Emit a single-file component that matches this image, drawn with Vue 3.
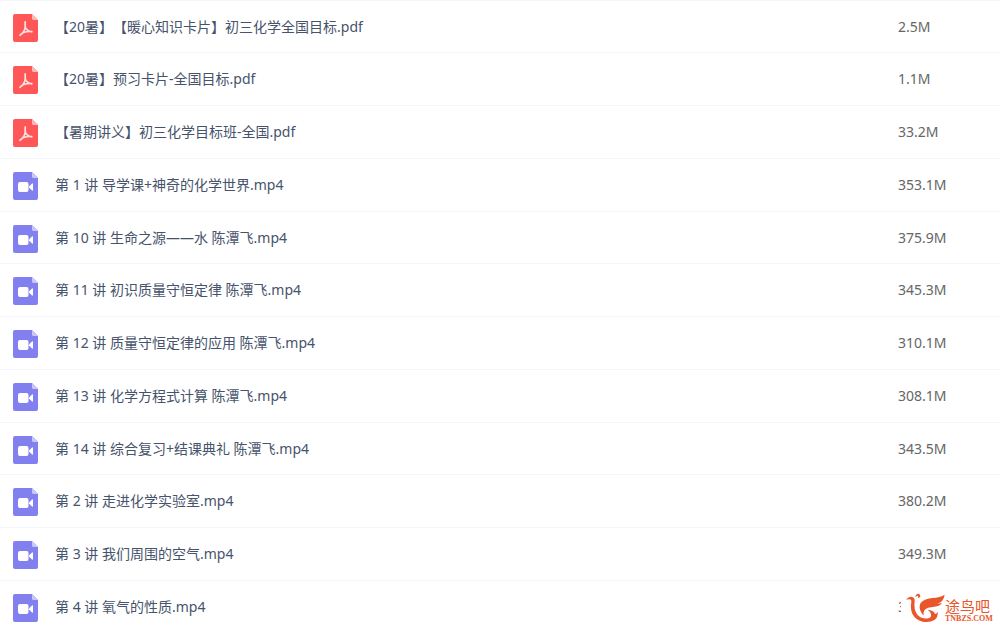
<script setup>
const files = [
  { name: '【20暑】【暖心知识卡片】初三化学全国目标.pdf', size: '2.5M', type: 'pdf' },
  { name: '【20暑】预习卡片-全国目标.pdf', size: '1.1M', type: 'pdf' },
  { name: '【暑期讲义】初三化学目标班-全国.pdf', size: '33.2M', type: 'pdf' },
  { name: '第 1 讲 导学课+神奇的化学世界.mp4', size: '353.1M', type: 'video' },
  { name: '第 10 讲 生命之源——水 陈潭飞.mp4', size: '375.9M', type: 'video' },
  { name: '第 11 讲 初识质量守恒定律 陈潭飞.mp4', size: '345.3M', type: 'video' },
  { name: '第 12 讲 质量守恒定律的应用 陈潭飞.mp4', size: '310.1M', type: 'video' },
  { name: '第 13 讲 化学方程式计算 陈潭飞.mp4', size: '308.1M', type: 'video' },
  { name: '第 14 讲 综合复习+结课典礼 陈潭飞.mp4', size: '343.5M', type: 'video' },
  { name: '第 2 讲 走进化学实验室.mp4', size: '380.2M', type: 'video' },
  { name: '第 3 讲 我们周围的空气.mp4', size: '349.3M', type: 'video' },
  { name: '第 4 讲 氧气的性质.mp4', size: '3', type: 'video' },
]
</script>

<template>
  <main class="page">
    <table class="files">
      <tbody>
        <tr v-for="file in files" :key="file.name">
          <td class="icon-cell">
            <svg v-if="file.type === 'pdf'" class="icon" viewBox="0 0 25 28" aria-hidden="true">
              <path d="M2 0H19L25 6V26Q25 28 23 28H2Q0 28 0 26V2Q0 0 2 0Z" fill="#ff5658" />
              <path d="M19 0L25 6H20.500Q19 6 19 4.500Z" fill="#ffb9b9" />
              <path d="M12.200 7.800V13Q12 17.500 7 21.300M12.200 13Q13.500 17 18.800 17.800M8 20.300Q11 17 18.800 17.600" fill="none" stroke="#ffe0e0" stroke-width="1.700" stroke-linecap="round" />
            </svg>
            <svg v-else class="icon" viewBox="0 0 25 28" aria-hidden="true">
              <path d="M2 0H19L25 6V26Q25 28 23 28H2Q0 28 0 26V2Q0 0 2 0Z" fill="#827fee" />
              <path d="M19 0L25 6H20.500Q19 6 19 4.500Z" fill="#c8c6fa" />
              <rect x="5" y="10" width="10.500" height="10" rx="2" fill="#fff" />
              <path d="M16 14.500L19 11.500Q20 11 20 12V18Q20 19 19 18.500L16 15.500Z" fill="#fff" />
            </svg>
          </td>
          <td class="name">{{ file.name }}</td>
          <td class="size">{{ file.size }}</td>
        </tr>
      </tbody>
    </table>
    <div class="mark">
      <svg class="bird" viewBox="72 66 120 90" aria-hidden="true">
        <g fill="#e8562a">
          <path d="M75 86Q84 75 94 78Q102 81 101 91Q97 118 110 132Q122 145 142 142Q152 140 150 130Q148 121 140 116Q158 117 162 129Q168 127 170 122Q172 138 160 147Q146 156 125 152Q103 146 94 128Q87 112 91 94Q92 87 87 85Q82 84 75 86Z" />
          <path d="M191 71Q178 80 154 81Q125 84 117 99Q112 117 128 134Q125 115 141 110Q156 109 171 105Q182 101 182 96Q175 98 169 98Q188 92 191 71Z" />
          <path d="M103 79Q104 68 112 68Q119 70 118 76Q116 82 110 80Q114 76 110 74Q106 74 103 79Z" />
        </g>
      </svg>
      <div class="words">
        <span class="title">途鸟吧</span>
        <span class="domain">TNBZS.COM</span>
      </div>
    </div>
  </main>
</template>

<style>
body {
  background: #fff;
  overflow: hidden;
}
</style>

<style scoped>
.page {
  position: relative;
  height: 100vh;
  overflow: hidden;
  font-family: "Noto Sans", "Noto Sans CJK SC", sans-serif;
  font-size: 14px;
  line-height: 20px;
  text-spacing-trim: space-all;
}
.files {
  width: 100%;
  border-collapse: separate;
  border-spacing: 0;
  table-layout: fixed;
}
td {
  box-sizing: border-box;
  height: 53px;
  padding: 0;
  border-top: 1px solid #f4f5f8;
  vertical-align: middle;
  white-space: nowrap;
}
tr:nth-child(4n + 1) td {
  height: 52px;
}
.icon-cell {
  width: 55px;
  padding: 2px 0 0 13px;
}
.icon {
  display: block;
  width: 25px;
  height: 28px;
}
.name {
  color: #46536b;
}
.size {
  width: 102px;
  color: #666;
}
.mark {
  position: absolute;
  right: 0;
  bottom: 0;
  display: flex;
  align-items: flex-end;
  box-sizing: border-box;
  width: 99px;
  height: 38px;
  padding: 0 0 4px 4px;
  background: #fff;
  color: #e8562a;
}
.bird {
  width: 40px;
  height: 30px;
}
.words {
  display: flex;
  flex-direction: column;
}
.title {
  font: 15px/18px "Noto Sans CJK SC", sans-serif;
}
.domain {
  font: bold 8px/8px "Liberation Serif", serif;
}
</style>
